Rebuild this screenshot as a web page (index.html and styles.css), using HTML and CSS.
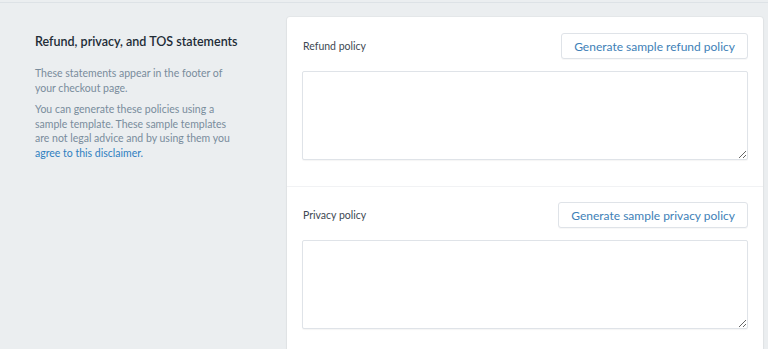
FILE: index.html
```html
<!DOCTYPE html>
<html lang="en">
<head>
    <meta charset="UTF-8">
    <meta name="viewport" content="width=device-width, initial-scale=1.0">
    <title>Checkout settings</title>
    <link rel="stylesheet" href="styles.css">
</head>
<body>
    <div class="top-rule"></div>

    <section class="layout">
        <div class="annotation">
            <h2>Refund, privacy, and TOS statements</h2>
            <p>These statements appear in the footer of your checkout page.</p>
            <p>You can generate these policies using a sample template. These sample templates are not legal advice and by using them you <a href="#">agree to this disclaimer.</a></p>
        </div>

        <div class="card">
            <div class="card-section">
                <div class="field-head">
                    <label for="refundPolicy">Refund policy</label>
                    <button type="button" class="btn">Generate sample refund policy</button>
                </div>
                <textarea id="refundPolicy"></textarea>
            </div>

            <div class="card-section">
                <div class="field-head">
                    <label for="privacyPolicy">Privacy policy</label>
                    <button type="button" class="btn">Generate sample privacy policy</button>
                </div>
                <textarea id="privacyPolicy"></textarea>
            </div>
        </div>
    </section>
</body>
</html>
```

FILE: styles.css
```css
body {
    font-family: 'Lato', 'Open Sans', sans-serif;
    margin: 0;
    padding: 0;
    background-color: #ebeef0;
    color: #212b36;
}

.top-rule {
    height: 2px;
    border-bottom: 1px solid #dde2e6;
}

.layout {
    display: flex;
    padding: 14px 5px 0 35px;
}

.annotation {
    width: 206px;
    padding-top: 16px;
    margin-right: 46px;
}

.annotation h2 {
    font-size: 12.5px;
    font-weight: 600;
    white-space: nowrap;
    margin: 0 0 15px;
    line-height: 18px;
}

.annotation p {
    font-size: 10.5px;
    line-height: 14.5px;
    color: #798c9c;
    margin: 0 0 7px;
}

.annotation a {
    color: #2f7fc1;
    text-decoration: none;
}

.card {
    flex: 1;
    background-color: white;
    border-radius: 3px;
    box-shadow: 0 0 0 1px rgba(63, 63, 68, 0.03), 0 1px 2px rgba(63, 63, 68, 0.1);
}

.card-section {
    padding: 16px 15px 26px 15px;
}

.card-section + .card-section {
    border-top: 1px solid #f1f2f4;
    padding-top: 15px;
}

.field-head {
    display: flex;
    justify-content: space-between;
    align-items: center;
    margin-bottom: 12px;
}

label {
    font-size: 10.5px;
    color: #3d4852;
    padding-left: 1px;
}

.btn {
    font-family: inherit;
    font-size: 12px;
    color: #3e7fb7;
    background-color: white;
    border: 1px solid #dfe3e8;
    border-radius: 3px;
    height: 26px;
    padding: 0 12px;
    cursor: pointer;
    box-shadow: 0 1px 0 rgba(22, 29, 37, 0.03);
}

textarea {
    display: block;
    width: 100%;
    height: 89px;
    box-sizing: border-box;
    border: 1px solid #dfe3e8;
    border-radius: 2px;
    box-shadow: 0 1px 1px rgba(0, 0, 0, 0.04);
    resize: vertical;
}
```
